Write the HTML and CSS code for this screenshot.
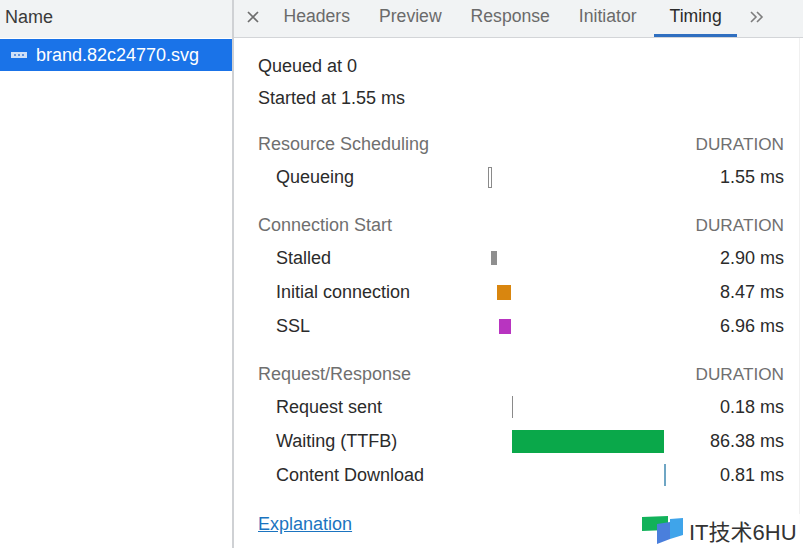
FILE: index.html
```html
<!DOCTYPE html>
<html>
  <head>
    <meta name="viewport" content="width=device-width, initial-scale=1.0">
    <title>Timing</title>
    <link rel="stylesheet" href="styles.css">
  </head>
  <body>
    <div class="devtools">
      <aside class="requests">
        <div class="requests-head">Name</div>
        <div class="request-row">
          <svg class="file-icon" width="16" height="8" viewBox="0 0 16 8">
            <rect x="0" y="1" width="16" height="6" fill="#cfe0f7"/>
            <rect x="3" y="3" width="2" height="2" fill="#5f93e0"/>
            <rect x="7" y="3" width="2" height="2" fill="#5f93e0"/>
            <rect x="11" y="3" width="2" height="2" fill="#5f93e0"/>
          </svg>
          <span>brand.82c24770.svg</span>
        </div>
      </aside>

      <main class="details">
        <nav class="tabs">
          <svg class="close" width="12" height="12" viewBox="0 0 12 12">
            <path d="M1 1L11 11M11 1L1 11" stroke="#6e6e6e" stroke-width="1.7" fill="none"/>
          </svg>
          <span class="tab">Headers</span>
          <span class="tab">Preview</span>
          <span class="tab">Response</span>
          <span class="tab">Initiator</span>
          <span class="tab active">Timing</span>
          <svg class="more" width="15" height="12" viewBox="0 0 15 12">
            <path d="M2 1L7 6L2 11M8 1L13 6L8 11" stroke="#7d7d7d" stroke-width="1.6" fill="none"/>
          </svg>
        </nav>

        <section class="timing">
          <p class="meta">Queued at 0</p>
          <p class="meta">Started at 1.55 ms</p>

          <div class="group group-first">
            <div class="group-head"><span>Resource Scheduling</span><span class="duration">DURATION</span></div>
            <div class="row row-tall">
              <span class="label">Queueing</span>
              <div class="track"><div class="bar bar-queue" style="margin-left: 0px; width: 4px"></div></div>
              <span class="time">1.55 ms</span>
            </div>
          </div>

          <div class="group">
            <div class="group-head"><span>Connection Start</span><span class="duration">DURATION</span></div>
            <div class="row">
              <span class="label">Stalled</span>
              <div class="track"><div class="bar bar-stalled" style="margin-left: 3px; width: 6px"></div></div>
              <span class="time">2.90 ms</span>
            </div>
            <div class="row">
              <span class="label">Initial connection</span>
              <div class="track"><div class="bar bar-connect" style="margin-left: 9px; width: 14px"></div></div>
              <span class="time">8.47 ms</span>
            </div>
            <div class="row">
              <span class="label">SSL</span>
              <div class="track"><div class="bar bar-ssl" style="margin-left: 11px; width: 12px"></div></div>
              <span class="time">6.96 ms</span>
            </div>
          </div>

          <div class="group">
            <div class="group-head"><span>Request/Response</span><span class="duration">DURATION</span></div>
            <div class="row">
              <span class="label">Request sent</span>
              <div class="track"><div class="bar bar-sent" style="margin-left: 24px; width: 1px"></div></div>
              <span class="time">0.18 ms</span>
            </div>
            <div class="row">
              <span class="label">Waiting (TTFB)</span>
              <div class="track"><div class="bar bar-wait" style="margin-left: 24px; width: 152px"></div></div>
              <span class="time">86.38 ms</span>
            </div>
            <div class="row">
              <span class="label">Content Download</span>
              <div class="track"><div class="bar bar-download" style="margin-left: 176px; width: 2px"></div></div>
              <span class="time">0.81 ms</span>
            </div>
          </div>

          <a class="explain" href="#">Explanation</a>
        </section>
      </main>
    </div>

    <div class="watermark">
      <svg width="42" height="30" viewBox="0 0 42 30">
        <path d="M0 2L26 1L26 15L0 16Z" fill="#12b25a"/>
        <path d="M15 9L28 7L28 24L15 29Z" fill="#4a7fdc"/>
        <path d="M28 4L41 3L41 20L28 24Z" fill="#3fa4ea"/>
      </svg>
      <span>IT技术6HU</span>
    </div>
  </body>
</html>
```

FILE: styles.css
```css
body {
  font-family: "Liberation Sans", Arial, sans-serif;
  font-size: 18px;
  color: #2b2b2b;
  margin: 0;
  padding: 0;
  background-color: white;
}
.devtools {
  display: flex;
  height: 548px;
  overflow: hidden;
}
.requests {
  width: 232px;
  flex: none;
  border-right: 2px solid #cfd1d4;
}
.requests-head {
  height: 38px;
  line-height: 35px;
  padding-left: 5px;
  background-color: #f1f3f4;
  color: #3a3a3a;
}
.request-row {
  display: flex;
  align-items: center;
  gap: 9px;
  height: 32px;
  padding-left: 11px;
  margin-top: 1px;
  background-color: #1a73e8;
  color: white;
}
.details {
  flex: 1;
  min-width: 0;
}
.tabs {
  display: flex;
  align-items: center;
  height: 37px;
  background-color: #f1f3f4;
  border-bottom: 1px solid #d3d5d8;
  color: #6a6a6a;
  font-size: 17.6px;
}
.close {
  margin-left: 13px;
  margin-right: 10px;
  margin-bottom: 3px;
}
.tab {
  height: 37px;
  line-height: 33px;
  padding: 0 14.5px;
  box-sizing: border-box;
}
.tab.active {
  margin-left: 3px;
  padding: 0 15.5px;
  color: #2b2b2b;
  border-bottom: 3px solid #2f6fc0;
}
.more {
  margin-left: 12px;
  margin-bottom: 3px;
}
.timing {
  margin-right: 3px;
  border-right: 1px solid #f0f0f0;
  padding: 12px 15px 0 24px;
  height: 498px;
  box-sizing: border-box;
}
.meta {
  margin: 0;
  height: 32px;
  line-height: 32px;
}
.group {
  margin-top: 15px;
}
.group-first {
  margin-top: 14px;
}
.group-head {
  display: flex;
  justify-content: space-between;
  height: 32px;
  line-height: 32px;
  color: #6f6f6f;
}
.duration {
  font-size: 17.2px;
}
.row {
  display: flex;
  align-items: center;
  height: 34px;
  padding-left: 18px;
}
.label {
  width: 212px;
  flex: none;
}
.track {
  width: 178px;
  flex: none;
}
.time {
  flex: 1;
  text-align: right;
}
.bar {
  height: 14px;
}
.bar-queue {
  height: 21px;
  box-sizing: border-box;
  border: 1px solid #8a8a8a;
  background-color: white;
}
.bar-stalled {
  background-color: #8f8f8f;
}
.bar-connect {
  height: 15px;
  background-color: #d9860f;
}
.bar-ssl {
  height: 15px;
  background-color: #b834c0;
}
.bar-sent {
  height: 22px;
  background-color: #8a8a8a;
}
.bar-wait {
  height: 23px;
  background-color: #0aa84a;
}
.bar-download {
  height: 22px;
  background-color: #6fa6c4;
}
.explain {
  display: block;
  margin-top: 22px;
  color: #1b74c0;
}
.watermark {
  position: absolute;
  left: 642px;
  top: 514px;
  display: flex;
  align-items: center;
  gap: 5px;
  padding-right: 5px;
  background-color: rgba(255, 255, 255, 0.85);
  font-family: "Liberation Sans", "Noto Sans CJK SC", sans-serif;
  font-size: 22px;
  color: #333;
}
```
